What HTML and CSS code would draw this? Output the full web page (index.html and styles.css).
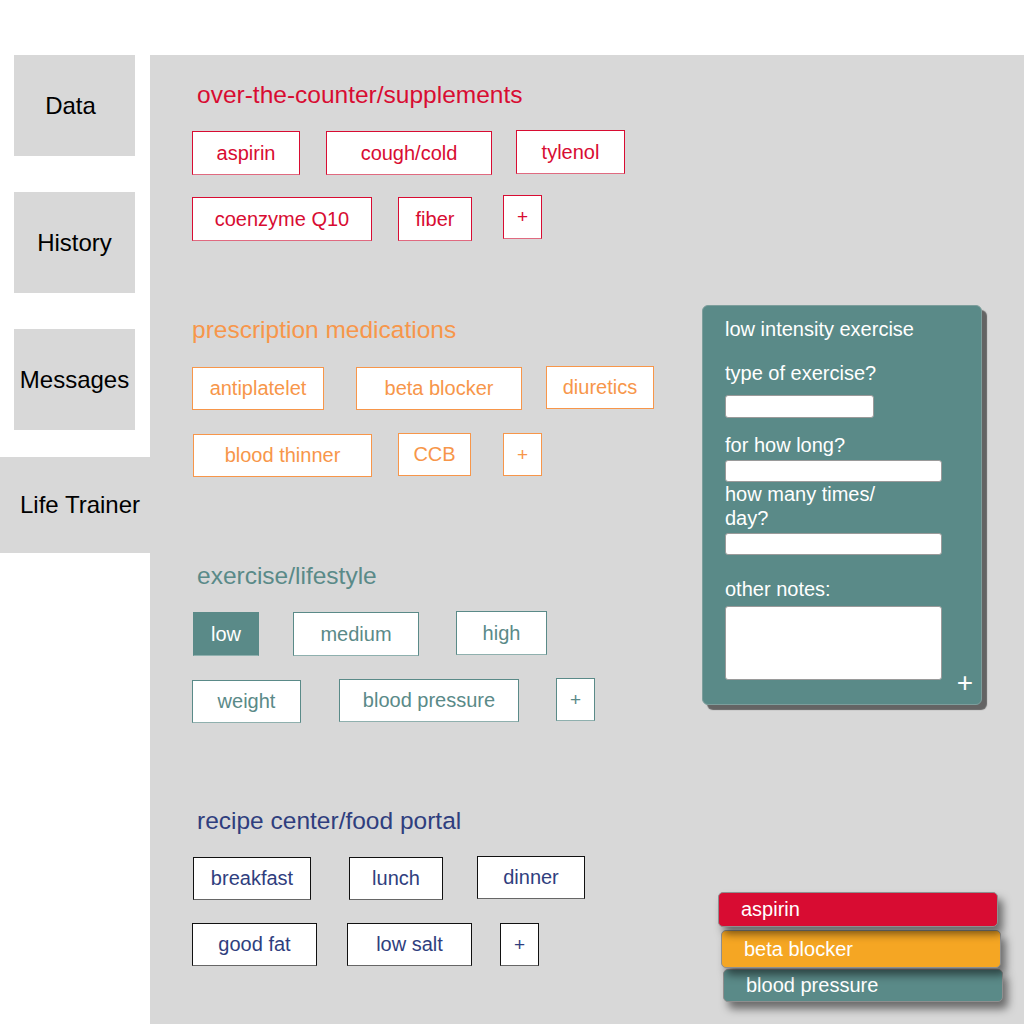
FILE: index.html
```html
<!DOCTYPE html>
<html>
<head>
<meta charset="utf-8">
<link rel="stylesheet" href="styles.css">
</head>
<body>
<div class="app">
  <nav class="sidebar">
    <div class="tab">Data</div>
    <div class="tab">History</div>
    <div class="tab">Messages</div>
    <div class="tab tab-active">Life Trainer</div>
  </nav>
  <main class="main">
    <section class="section sec-otc">
      <h2 class="heading">over-the-counter/supplements</h2>
      <div class="rows">
        <div class="row">
          <div class="chip w108">aspirin</div>
          <div class="chip w166 ml26">cough/cold</div>
          <div class="chip w109 ml24 up1">tylenol</div>
        </div>
        <div class="row">
          <div class="chip w180">coenzyme Q10</div>
          <div class="chip w74 ml26">fiber</div>
          <div class="chip plus ml31 up2">+</div>
        </div>
      </div>
    </section>

    <section class="section sec-rx">
      <h2 class="heading">prescription medications</h2>
      <div class="rows">
        <div class="row">
          <div class="chip w132">antiplatelet</div>
          <div class="chip w166 ml32">beta blocker</div>
          <div class="chip w108 ml24 up1">diuretics</div>
        </div>
        <div class="row">
          <div class="chip w179 ml1">blood thinner</div>
          <div class="chip w73 ml26 up1">CCB</div>
          <div class="chip plus ml32 up1">+</div>
        </div>
      </div>
    </section>

    <section class="section sec-ex">
      <h2 class="heading">exercise/lifestyle</h2>
      <div class="rows">
        <div class="row">
          <div class="chip chip-filled w66 ml1">low</div>
          <div class="chip w126 ml34">medium</div>
          <div class="chip w91 ml37 up1">high</div>
        </div>
        <div class="row">
          <div class="chip w109">weight</div>
          <div class="chip w180 ml38 up1">blood pressure</div>
          <div class="chip plus ml37 up2">+</div>
        </div>
      </div>
    </section>

    <section class="section sec-food">
      <h2 class="heading">recipe center/food portal</h2>
      <div class="rows">
        <div class="row">
          <div class="chip w118 ml1">breakfast</div>
          <div class="chip w94 ml38">lunch</div>
          <div class="chip w108 ml34 up1">dinner</div>
        </div>
        <div class="row">
          <div class="chip w125">good fat</div>
          <div class="chip w125 ml30">low salt</div>
          <div class="chip plus ml28">+</div>
        </div>
      </div>
    </section>

    <div class="popover">
      <div class="pop-title">low intensity exercise</div>
      <div class="pop-label l1">type of exercise?</div>
      <div class="pop-input short"></div>
      <div class="pop-label l2">for how long?</div>
      <div class="pop-input i2"></div>
      <div class="pop-label l3">how many times/<br>day?</div>
      <div class="pop-input i3"></div>
      <div class="pop-label l4">other notes:</div>
      <div class="pop-textarea"></div>
      <div class="pop-plus">+</div>
    </div>

    <div class="card card-red">aspirin</div>
    <div class="card card-orange">beta blocker</div>
    <div class="card card-teal">blood pressure</div>
  </main>
</div>
</body>
</html>
```
FILE: styles.css
```css
* { box-sizing: border-box; }
html, body { margin: 0; padding: 0; }
body {
  font-family: "Liberation Sans", Arial, Helvetica, sans-serif;
  background: #ffffff;
  width: 1024px;
  height: 1024px;
  overflow: hidden;
}
.app {
  display: flex;
  padding-top: 55px;
  height: 1024px;
}
.sidebar {
  width: 150px;
  flex: none;
  display: flex;
  flex-direction: column;
}
.tab {
  width: 121px;
  height: 101px;
  margin-left: 14px;
  margin-bottom: 36px;
  background: #d8d8d8;
  display: flex;
  align-items: center;
  justify-content: center;
  font-size: 24px;
  color: #000;
}
.tab:nth-child(1) { padding-right: 8px; }
.tab:nth-child(3) { margin-bottom: 27px; }
.tab-active {
  width: 150px;
  height: 96px;
  margin-left: 0;
  padding-left: 10px;
}
.main {
  flex: 1;
  background: #d8d8d8;
  position: relative;
  padding: 27px 0 0 42px;
}
.section { display: flex; flex-direction: column; }
.heading {
  margin: 0 0 23px 5px;
  font-weight: normal;
  font-size: 24.5px;
  line-height: 26px;
}
.rows { display: flex; flex-direction: column; gap: 22px; }
.row { display: flex; align-items: flex-start; }
.chip {
  height: 44px;
  border: 1px solid;
  background: #fff;
  display: flex;
  align-items: center;
  justify-content: center;
  font-size: 20px;
}
.plus { width: 39px; font-size: 19px; }
.up1 { margin-top: -1px; }
.up2 { margin-top: -2px; }
.w66 { width: 66px; } .w73 { width: 73px; } .w74 { width: 74px; }
.w91 { width: 91px; } .w94 { width: 94px; } .w108 { width: 108px; }
.w109 { width: 109px; } .w118 { width: 118px; } .w125 { width: 125px; }
.w126 { width: 126px; } .w132 { width: 132px; } .w166 { width: 166px; }
.w179 { width: 179px; } .w180 { width: 180px; }
.ml1 { margin-left: 1px; } .ml24 { margin-left: 24px; } .ml26 { margin-left: 26px; }
.ml28 { margin-left: 28px; } .ml30 { margin-left: 30px; } .ml31 { margin-left: 31px; }
.ml32 { margin-left: 32px; } .ml34 { margin-left: 34px; } .ml37 { margin-left: 37px; }
.ml38 { margin-left: 38px; }

.sec-otc .heading { color: #d80c32; }
.sec-otc .chip { color: #d80c32; border-color: #d80c32; border-bottom-color: #e06a80; }

.sec-rx { margin-top: 76px; }
.sec-rx .heading { color: #f7964a; margin-left: 0; margin-bottom: 24px; }
.sec-rx .rows { gap: 24px; }
.sec-rx .chip { color: #f7964a; border-color: #f7964a; height: 43px; }

.sec-ex { margin-top: 86px; }
.sec-ex .heading { color: #5a8a88; }
.sec-ex .rows { gap: 24px; }
.sec-ex .chip { color: #5a8a88; border-color: #5a8a88; border-bottom-color: #8fb0ae; }
.sec-ex .row + .row .chip { height: 43px; }
.sec-ex .chip-filled { background: #5a8a88; color: #fff; }

.sec-food { margin-top: 85px; }
.sec-food .heading { color: #2f3e7e; }
.sec-food .rows { gap: 23px; }
.sec-food .chip { color: #2f3e7e; border-color: #111; border-bottom-color: #666; height: 43px; }

.popover {
  position: absolute;
  left: 552px;
  top: 250px;
  width: 280px;
  height: 400px;
  background: #5a8a88;
  border: 1px solid #7d9e9c;
  border-radius: 6px;
  box-shadow: 5px 5px 1px #646464;
  padding: 12px 0 0 22px;
  color: #fff;
  font-size: 20px;
}
.pop-title { line-height: 22px; }
.pop-label { line-height: 22px; }
.l1 { margin-top: 22px; }
.l2 { margin-top: 16px; }
.l3 { line-height: 24px; margin-top: 0; }
.l4 { margin-top: 23px; }
.pop-input {
  width: 217px;
  height: 22px;
  background: #fff;
  border: 1px solid #9a9a9a;
  border-radius: 3px;
}
.short { width: 149px; height: 23px; margin-top: 11px; }
.i2 { margin-top: 4px; }
.i3 { margin-top: 3px; }
.pop-textarea {
  margin-top: 6px;
  width: 217px;
  height: 74px;
  background: #fff;
  border: 1px solid #9a9a9a;
  border-radius: 3px;
}
.pop-plus {
  position: absolute;
  right: 8px;
  bottom: 8px;
  font-size: 28px;
  line-height: 26px;
  color: #fff;
}

.card {
  position: absolute;
  width: 280px;
  border: 1px solid #8f8f8f;
  border-radius: 5px;
  color: #fff;
  font-size: 20px;
  padding-left: 22px;
  display: flex;
  align-items: center;
  box-shadow: 5px 7px 9px rgba(0, 0, 0, 0.5);
}
.card-red { left: 568px; top: 837px; height: 35px; background: #d80c32; z-index: 3; }
.card-orange { left: 571px; top: 875px; height: 38px; background: #f5a623; z-index: 2; }
.card-teal { left: 573px; top: 914px; height: 33px; background: #5a8a88; z-index: 1; }
```
